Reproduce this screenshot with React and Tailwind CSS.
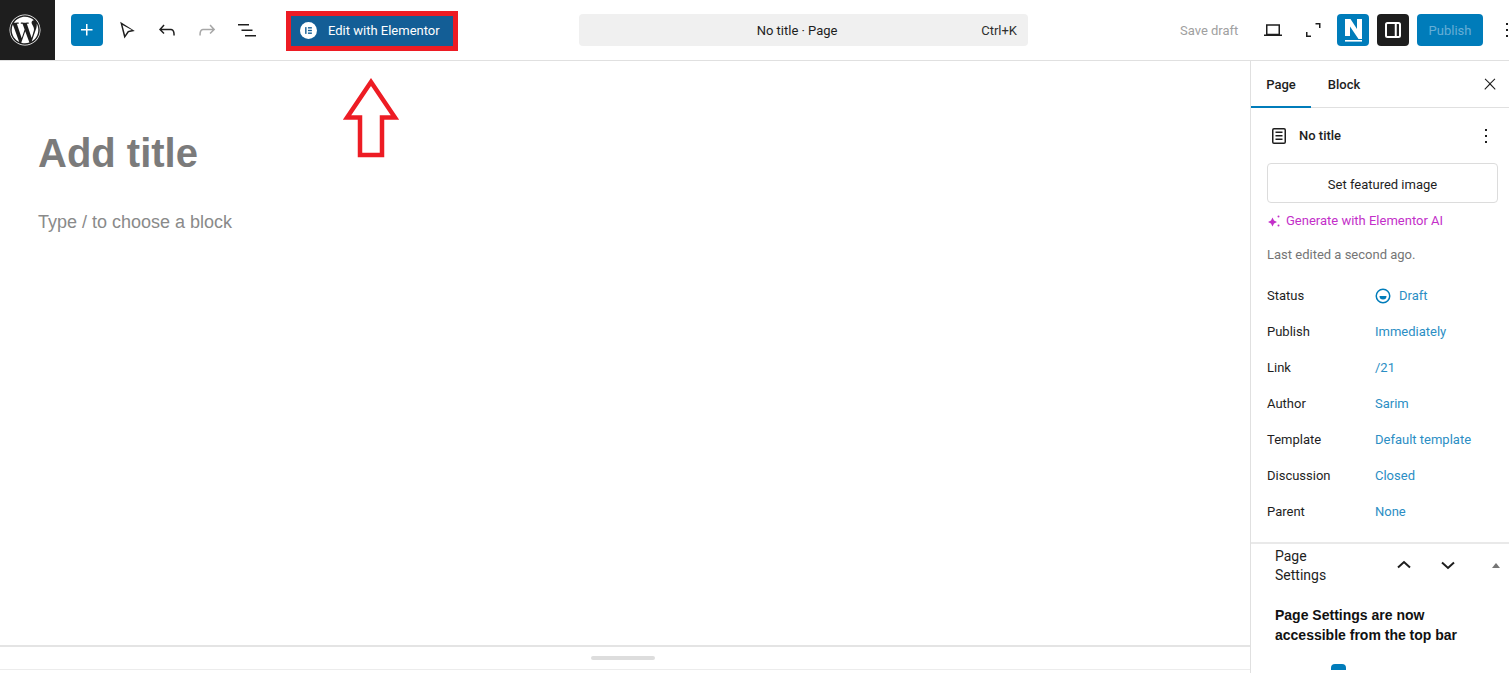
import { FaWordpress } from "react-icons/fa";

const Icon = ({ d, className = "", size = 24 }) => (
  <svg viewBox="0 0 24 24" width={size} height={size} className={className} fill="currentColor">
    <path d={d} />
  </svg>
);

const meta = [
  ["Publish", "Immediately"],
  ["Link", "/21"],
  ["Author", "Sarim"],
  ["Template", "Default template"],
  ["Discussion", "Closed"],
  ["Parent", "None"],
];

function Toolbar() {
  return (
    <header className="flex h-[61px] shrink-0 items-center overflow-hidden border-b border-[#e0e0e0] bg-white [&>*]:shrink-0">
      <div className="flex h-[60px] w-[55px] items-center justify-center bg-[#1e1e1e] pr-[5px] text-white">
        <FaWordpress size={32} />
      </div>
      <button className="ml-4 flex h-8 w-8 items-center justify-center rounded-sm bg-[#007cba] text-white">
        <Icon d="M11 12.5V17.5H12.5V12.5H17.5V11H12.5V6H11V11H6V12.5H11Z" />
      </button>
      <div className="ml-1 flex text-[#1e1e1e]">
        <span className="flex w-10 justify-center">
          <Icon d="M9.4 20.5 5.2 3.8l14.6 9.1-6 1.4-4.4 6.2ZM7.5 6.9l2.6 10 2.7-3.9 4-.9-9.3-5.2Z" />
        </span>
        <span className="flex w-10 justify-center">
          <Icon d="M18.3 11.7c-.6-.6-1.4-.9-2.3-.9H6.7l2.9-3.3-1.1-1-4.5 5L8.5 16l1-1-2.7-2.7H16c.5 0 .9.2 1.3.5 1 1 1 3.4 1 4.5v.3h1.5v-.2c0-1.5 0-4.3-1.5-5.7z" />
        </span>
        <span className="flex w-10 justify-center text-[#a7a7a7]">
          <Icon d="M15.6 6.5l-1.1 1 2.9 3.3H8c-.9 0-1.7.3-2.3.9-1.4 1.5-1.4 4.2-1.4 5.6v.2h1.5v-.3c0-1.1 0-3.5 1-4.5.3-.3.7-.5 1.3-.5h9.2L14.5 15l1.1 1.1 4.6-4.6-4.6-5z" />
        </span>
        <span className="flex w-10 justify-center">
          <Icon d="M3 6h11v1.5H3V6Zm3.5 5.5h11V13h-11v-1.5ZM21 17H10v1.5h11V17Z" />
        </span>
      </div>
      <button className="ml-[19px] mt-[2px] flex h-10 w-[172px] items-center border-[5px] border-[#ed1c24] bg-[#135e96] pl-[9px] text-[13px] text-white">
        <span className="-mt-[2px] flex h-[17px] w-[17px] items-center justify-center rounded-full bg-white">
          <svg viewBox="0 0 16 16" width="9" height="9" fill="#135e96">
            <rect x="2" y="2" width="2.5" height="12" />
            <rect x="7" y="2" width="7" height="2.5" />
            <rect x="7" y="6.75" width="7" height="2.5" />
            <rect x="7" y="11.5" width="7" height="2.5" />
          </svg>
        </span>
        <span className="ml-[11px] whitespace-nowrap">Edit with Elementor</span>
      </button>
      <div className="ml-[121px] flex h-8 w-[449px] items-center rounded-sm bg-[#f0f0f0] pr-[11px] pt-[2px] text-[13px] text-[#1e1e1e]">
        <span className="flex-1 pl-[34px] text-center">No title · Page</span>
        <span className="text-[#2f2f2f]">Ctrl+K</span>
      </div>
      <span className="ml-[152px] mt-[2px] w-[58px] whitespace-nowrap text-[13px] text-[#a0a0a0]">Save draft</span>
      <span className="ml-[23px] flex w-6 justify-center text-[#1e1e1e]">
        <svg viewBox="0 0 24 24" width="24" height="24" fill="none" stroke="currentColor" strokeWidth="1.5">
          <path d="M5.75 7h12.5v9.5H5.75zM3 17.25h18" />
        </svg>
      </span>
      <span className="ml-4 flex w-6 justify-center text-[#1e1e1e]">
        <svg viewBox="0 0 24 24" width="24" height="24" fill="none" stroke="currentColor" strokeWidth="1.5">
          <path d="M14.5 5.75h4.25V10M5.75 14v4.25H10" />
        </svg>
      </span>
      <span className="ml-3 flex h-8 w-8 flex-col items-center justify-center rounded-sm bg-[#007cba] text-white">
        <svg viewBox="0 0 32 32" width="32" height="32" fill="currentColor">
          <path d="M8 5h5.5L20 15V5h5v20h-3.5L13 12.5V22H8z" />
          <rect x="8" y="26" width="17" height="1.6" />
        </svg>
      </span>
      <span className="ml-2 flex h-8 w-8 items-center justify-center rounded-sm bg-[#1e1e1e] text-white">
        <svg viewBox="0 0 24 24" width="24" height="24" fill="none" stroke="currentColor" strokeWidth="2">
          <rect x="5" y="5" width="14" height="14" rx="1.5" />
          <path d="M14.75 5v14" />
        </svg>
      </span>
      <button className="ml-2 h-8 w-[66px] rounded-sm bg-[#007cba] pt-[2px] text-[13px] text-[#66aed6]">Publish</button>
      <span className="ml-3 flex w-6 justify-center text-[#1e1e1e]">
        <Icon d="M13 19h-2v-2h2v2zm0-6h-2v-2h2v2zm0-6h-2V5h2v2z" />
      </span>
    </header>
  );
}

function Sidebar() {
  return (
    <aside className="flex w-[259px] shrink-0 flex-col overflow-hidden border-l border-[#e0e0e0] bg-white text-[13px] text-[#1e1e1e]">
      <div className="flex h-[47px] shrink-0 items-stretch border-b border-[#e0e0e0] font-medium">
        <span className="-mb-px flex w-[60px] items-center justify-center border-b-2 border-[#007cba] pt-[2px]">Page</span>
        <span className="flex w-[66px] items-center justify-center pt-[2px]">Block</span>
        <span className="ml-auto mr-[10px] flex items-center">
          <Icon size={18} d="M13 11.8l6.1-6.3-1-1-6.1 6.2-6.1-6.2-1 1 6.1 6.3-6.5 6.7 1 1 6.5-6.6 6.5 6.6 1-1z" />
        </span>
      </div>

      <div className="px-4 pt-4">
        <div className="flex h-6 items-center font-medium">
          <svg viewBox="0 0 24 24" width="24" height="24" fill="currentColor">
            <path d="M15.5 7.5h-7V9h7V7.5Zm-7 3.5h7v1.5h-7V11Zm7 3.5h-7V16h7v-1.5Z" />
            <path d="M17 4H7a2 2 0 0 0-2 2v12a2 2 0 0 0 2 2h10a2 2 0 0 0 2-2V6a2 2 0 0 0-2-2Zm.5 14a.5.5 0 0 1-.5.5H7a.5.5 0 0 1-.5-.5V6a.5.5 0 0 1 .5-.5h10a.5.5 0 0 1 .5.5v12Z" />
          </svg>
          <span className="ml-2">No title</span>
          <span className="ml-auto -mr-[5px]">
            <Icon d="M13 19h-2v-2h2v2zm0-6h-2v-2h2v2zm0-6h-2V5h2v2z" />
          </span>
        </div>
        <button className="mt-[15px] h-10 w-[231px] rounded-sm border border-[#dcdcdc] pt-[3px] text-[#1e1e1e]">Set featured image</button>
        <div className="mt-[9px] flex h-[18px] items-center text-[#c32fc9]">
          <svg viewBox="0 0 14 14" width="14" height="14" fill="currentColor">
            <path d="M5.5 3.5 7 6.5l3 1.5-3 1.5L5.5 12.5 4 9.5 1 8l3-1.5z" />
            <rect x="10.5" y="1.5" width="2" height="2" rx="1" />
            <rect x="10.5" y="10.5" width="2" height="2" rx="1" />
          </svg>
          <span className="ml-[5px]">Generate with Elementor AI</span>
        </div>
        <p className="mt-4 leading-[18px] text-[#757575]">Last edited a second ago.</p>

        <div className="mt-[23px] flex h-9 items-start">
          <span className="w-[108px] leading-[18px]">Status</span>
          <span className="flex items-center leading-[18px] text-[#2b8ec4]">
            <svg viewBox="0 0 16 16" width="16" height="16" fill="none" stroke="#007cba" strokeWidth="1.5">
              <circle cx="8" cy="8" r="6.75" />
              <path d="M4.5 8h7a3.5 3.5 0 0 1-7 0Z" fill="#007cba" stroke="none" />
            </svg>
            <span className="ml-2">Draft</span>
          </span>
        </div>
        {meta.map(([label, value]) => (
          <div key={label} className="flex h-9 items-start leading-[18px]">
            <span className="w-[108px]">{label}</span>
            <span className="text-[#2b8ec4]">{value}</span>
          </div>
        ))}
      </div>

      <div className="mt-[3px] border-t-2 border-[#e9e9e9] pl-6 pr-[9px]">
        <div className="flex h-[42px] items-center">
          <span className="w-[88px] pt-[2px] text-sm leading-[19px]">
            Page
            <br />
            Settings
          </span>
          <span className="ml-[29px] flex">
            <svg viewBox="0 0 24 24" width="24" height="24" fill="none" stroke="currentColor" strokeWidth="2">
              <path d="M6 14.5 12 9l6 5.5" />
            </svg>
            <svg viewBox="0 0 24 24" width="24" height="24" fill="none" stroke="currentColor" strokeWidth="2" className="ml-5">
              <path d="M6 9.5 12 15l6-5.5" />
            </svg>
          </span>
          <span className="ml-auto h-0 w-0 border-x-[4px] border-b-[5px] border-x-transparent border-b-[#757575]" />
        </div>
        <p className="mt-[19px] font-['Liberation_Sans',sans-serif] text-sm font-bold leading-5 text-[#111111]">
          Page Settings are now
          <br />
          accessible from the top bar
        </p>
        <div className="ml-[56px] mt-[19px] h-[6px] w-[15px] rounded-t-sm bg-[#007cba]" />
      </div>
    </aside>
  );
}

export default function App() {
  return (
    <div className="relative flex h-[673px] w-[1509px] flex-col overflow-hidden bg-white font-['Roboto',sans-serif]">
      <Toolbar />
      <div className="flex min-h-0 flex-1">
        <main className="flex min-w-0 flex-1 flex-col">
          <div className="flex-1 pl-[38px] pt-[68px] font-['Liberation_Sans',sans-serif]">
            <h1 className="text-[40px] font-bold leading-[48px] text-[#7b7b7b]">Add title</h1>
            <p className="mt-[33px] text-lg leading-[24px] text-[#8a8a8a]">Type / to choose a block</p>
          </div>
          <div className="flex h-[25px] shrink-0 items-center justify-center border-y border-t-2 border-[#e4e4e4] border-b-[#ececec]">
            <span className="mr-1 h-1 w-16 rounded-full bg-[#dddddd]" />
          </div>
          <div className="h-[3px] shrink-0" />
        </main>
        <Sidebar />
      </div>

      <svg className="absolute left-[343px] top-[78px]" width="56" height="82" viewBox="0 0 56 82" fill="none">
        <path d="M28 4 4 39.5h13V77h22V39.5h13z" stroke="#ed1c24" strokeWidth="4.5" />
      </svg>
    </div>
  );
}
